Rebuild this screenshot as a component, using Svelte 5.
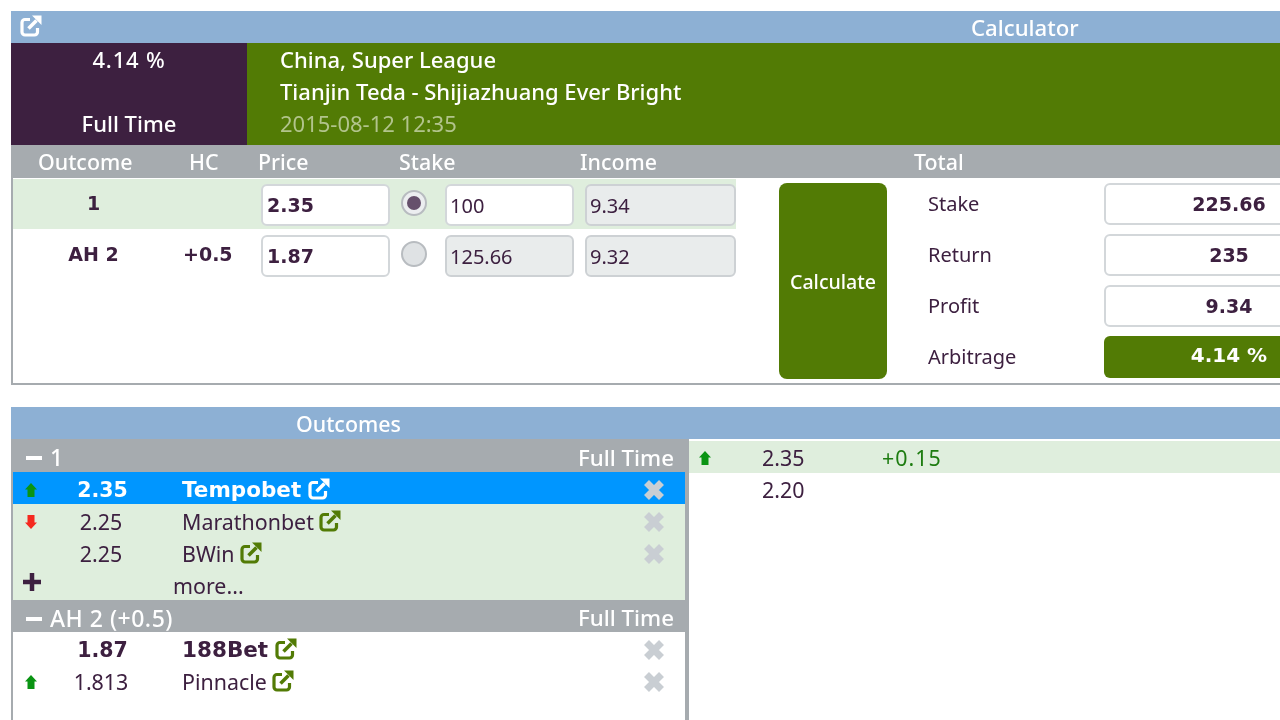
<script>
  const calcRows = [
    { name: "1", hc: "", price: "2.35", stake: "100", income: "9.34", active: true },
    { name: "AH 2", hc: "+0.5", price: "1.87", stake: "125.66", income: "9.32", active: false }
  ];
  const totals = [
    { label: "Stake", value: "225.66" },
    { label: "Return", value: "235" },
    { label: "Profit", value: "9.34" }
  ];
  const groups = [
    {
      title: "1",
      tint: true,
      more: true,
      rows: [
        { arrow: "up", odds: "2.35", book: "Tempobet", best: true, selected: true },
        { arrow: "down", odds: "2.25", book: "Marathonbet" },
        { arrow: "", odds: "2.25", book: "BWin" }
      ]
    },
    {
      title: "AH 2 (+0.5)",
      tint: false,
      more: false,
      rows: [
        { arrow: "", odds: "1.87", book: "188Bet", best: true },
        { arrow: "up", odds: "1.813", book: "Pinnacle" }
      ]
    }
  ];
</script>

{#snippet extLink(cls)}
  <svg class="ext {cls}" viewBox="0 0 22 22" aria-hidden="true">
    <path d="M10 4.5H5a3 3 0 0 0-3 3v9.5a3 3 0 0 0 3 3h9.5a3 3 0 0 0 3-3V13" fill="none" stroke="currentColor" stroke-width="3.2" />
    <path d="M12 .5h9.5V10z" fill="currentColor" />
    <path d="M16.5 5.5L8.5 13.5" fill="none" stroke="currentColor" stroke-width="3.6" />
  </svg>
{/snippet}

{#snippet arrow(dir)}
  <svg class="arrow {dir}" viewBox="0 0 12 14" aria-hidden="true">
    <path d="M6 0l6 6.5H9.5V14h-7V6.5H0z" fill="currentColor" />
  </svg>
{/snippet}

<div class="page">
  <section class="panel calc">
    <header class="title">
      {@render extLink("light")}
      <span class="calc-title">Calculator</span>
    </header>
    <div class="info">
      <div class="pct">
        <span class="pct-val">4.14 %</span>
        <span>Full Time</span>
      </div>
      <div class="match">
        <span>China, Super League</span>
        <span>Tianjin Teda - Shijiazhuang Ever Bright</span>
        <span class="date">2015-08-12 12:35</span>
      </div>
    </div>
    <div class="heads">
      <span class="h-outcome">Outcome</span>
      <span class="h-hc">HC</span>
      <span class="h-price">Price</span>
      <span class="h-stake">Stake</span>
      <span class="h-income">Income</span>
      <span class="h-total">Total</span>
    </div>
    <div class="calc-body">
      <div class="calc-rows">
        {#each calcRows as row}
          <div class="calc-row" class:tint={row.active}>
            <b class="c-name">{row.name}</b>
            <b class="c-hc">{row.hc}</b>
            <div class="field strong c-price">{row.price}</div>
            <span class="radio" class:on={row.active}></span>
            <div class="field c-stake" class:off={!row.active}>{row.stake}</div>
            <div class="field off c-income">{row.income}</div>
          </div>
        {/each}
      </div>
      <button class="calculate">Calculate</button>
      <div class="totals">
        {#each totals as t}
          <div class="total-row">
            <span class="t-label">{t.label}</span>
            <div class="field strong t-value">{t.value}</div>
          </div>
        {/each}
        <div class="total-row">
          <span class="t-label">Arbitrage</span>
          <div class="t-value arb">4.14 %</div>
        </div>
      </div>
    </div>
  </section>

  <section class="panel outcomes">
    <header class="title"><span class="out-title">Outcomes</span></header>
    <div class="out-body">
      <div class="out-left">
        {#each groups as g}
          <div class="group-head">
            <span class="minus"></span>
            <span class="g-title">{g.title}</span>
            <span class="g-time">Full Time</span>
          </div>
          <div class:tint={g.tint}>
            {#each g.rows as r}
              <div class="odds-row" class:selected={r.selected} class:best={r.best}>
                <span class="o-arrow">{#if r.arrow}{@render arrow(r.arrow)}{/if}</span>
                <span class="o-odds">{r.odds}</span>
                <span class="o-book">{r.book}{@render extLink("")}</span>
                <svg class="remove" viewBox="0 0 22 22" aria-hidden="true">
                  <path d="M3.5 3.5l15 15M18.5 3.5l-15 15" stroke="currentColor" stroke-width="7" />
                </svg>
              </div>
            {/each}
            {#if g.more}
              <div class="odds-row more">
                <svg class="plus" viewBox="0 0 18 18" aria-hidden="true">
                  <path d="M0 9h18M9 0v18" stroke="currentColor" stroke-width="4.5" />
                </svg>
                <span>more...</span>
              </div>
            {/if}
          </div>
        {/each}
      </div>
      <div class="out-right">
        <div class="hist tint">
          <span class="o-arrow">{@render arrow("up")}</span>
          <span class="h-odds">2.35</span>
          <span class="h-diff">+0.15</span>
        </div>
        <div class="hist">
          <span class="o-arrow"></span>
          <span class="h-odds">2.20</span>
        </div>
      </div>
    </div>
  </section>
</div>

<style>
  :global(body) {
    margin: 0;
    background: #fff;
  }
  .page {
    width: 1280px;
    height: 720px;
    overflow: hidden;
    box-sizing: border-box;
    padding: 11px 0 0 11px;
    display: flex;
    flex-direction: column;
    gap: 22px;
    font-family: "Noto Sans", sans-serif;
    font-size: 21.4px;
    color: #3d2040;
    filter: blur(0.5px);
  }
  .panel {
    width: 1300px;
    flex: none;
  }
  .title {
    height: 32px;
    background: #8db0d4;
    color: #fff;
    display: flex;
    align-items: center;
    font-size: 22.2px;
    font-weight: 500;
    line-height: 33px;
  }
  .title .ext {
    margin-left: 9px;
    margin-top: -3px;
  }
  .calc-title {
    margin-left: 929px;
  }
  .out-title {
    margin-left: 285px;
    font-size: 21.4px;
  }
  .ext {
    width: 22px;
    height: 22px;
    color: #527b05;
    flex: none;
    margin-left: 5px;
  }
  .best .ext {
    margin-left: 7px;
  }
  .ext.light,
  .selected .ext {
    color: #fff;
  }

  .calc {
    border-bottom: 2px solid #a6abaf;
    height: 372px;
  }
  .info {
    height: 102px;
    display: flex;
    background: #527b05;
    color: #fff;
    font-size: 22px;
    font-weight: 500;
    line-height: 32px;
  }
  .pct {
    width: 236px;
    background: #3d2040;
    display: flex;
    flex-direction: column;
    justify-content: space-between;
    align-items: center;
    padding-bottom: 6px;
    box-sizing: border-box;
  }
  .pct-val {
    letter-spacing: 0.8px;
  }
  .match {
    display: flex;
    flex-direction: column;
    padding-left: 33px;
  }
  .date {
    color: #b2c48c;
    font-weight: 400;
  }
  .heads {
    height: 33px;
    box-sizing: border-box;
    padding-bottom: 1px;
    background: #a6abaf;
    color: #fff;
    font-size: 21.4px;
    font-weight: 500;
    display: grid;
    grid-template-columns: 27px 151px 69px 141px 181px 334px auto;
    align-items: center;
  }
  .h-outcome { grid-column: 2; }
  .h-hc { grid-column: 3; }
  .h-price { grid-column: 4; }
  .h-stake { grid-column: 5; }
  .h-income { grid-column: 6; }
  .h-total { grid-column: 7; }

  .calc-body {
    display: flex;
    height: 205px;
    border-left: 2px solid #a6abaf;
    padding-top: 1px;
    box-sizing: border-box;
  }
  .calc-rows {
    width: 723px;
    flex: none;
  }
  .calc-row {
    height: 50px;
    margin-bottom: 1px;
    display: grid;
    grid-template-columns: 161px 87px 129px 55px 129px 11px 151px;
    grid-template-areas: "name hc price radio stake gap income";
    align-items: start;
    box-sizing: border-box;
    padding-top: 5px;
  }
  .c-price { grid-area: price; }
  .c-stake { grid-area: stake; }
  .c-income { grid-area: income; }
  .tint {
    background: #dfeedd;
  }
  .c-name, .c-hc {
    font: bold 19px/38px "DejaVu Sans", sans-serif;
  }
  .c-name { grid-area: name; text-align: center; }
  .c-hc { grid-area: hc; padding-left: 9px; }
  .field {
    height: 42px;
    box-sizing: border-box;
    background: #fff;
    border: 2px solid #d3d7da;
    border-radius: 6px;
    padding-left: 3px;
    font-size: 20px;
    line-height: 39px;
  }
  .field.strong {
    padding-left: 4px;
    font: bold 19px/39px "DejaVu Sans", sans-serif;
  }
  .field.off {
    background: #e9ecec;
    border-color: #cdd1d4;
  }
  .radio {
    grid-area: radio;
    width: 26px;
    height: 26px;
    margin: 6px 0 0 11px;
    box-sizing: border-box;
    border-radius: 50%;
    background: #dfe2e4;
    border: 2px solid #b8bcc0;
    position: relative;
  }
  .radio.on {
    background: #eceef0;
  }
  .radio.on::after {
    content: "";
    position: absolute;
    left: 4px;
    top: 4px;
    width: 14px;
    height: 14px;
    border-radius: 50%;
    background: #66506c;
  }
  .calculate {
    width: 108px;
    height: 196px;
    margin: 4px 0 0 43px;
    flex: none;
    background: #527b05;
    color: #fff;
    border: 0;
    border-radius: 8px;
    padding: 0;
    font: 500 19.6px "Noto Sans", sans-serif;
  }
  .totals {
    margin-left: 41px;
    padding-top: 4px;
    display: flex;
    flex-direction: column;
    gap: 9px;
  }
  .total-row {
    display: flex;
    height: 42px;
    align-items: center;
  }
  .t-label {
    width: 176px;
    font-size: 20px;
    margin-top: -2px;
  }
  .t-value,
  .field.strong.t-value {
    width: 186px;
    text-align: center;
    padding: 0 0 0 64px;
  }
  .arb {
    height: 42px;
    box-sizing: border-box;
    background: #527b05;
    color: #fff;
    border-radius: 6px;
    font: bold 20px/38px "DejaVu Sans", sans-serif;
  }

  .out-body {
    display: flex;
    border-left: 2px solid #a6abaf;
  }
  .out-left {
    width: 672px;
    flex: none;
    padding-bottom: 40px;
    border-right: 4px solid #a6abaf;
  }
  .group-head {
    height: 32px;
    box-sizing: border-box;
    background: #a6abaf;
    color: #fff;
    font-weight: 500;
    display: flex;
    align-items: center;
    padding: 3px 11px 0 13px;
  }
  .group-head:first-child {
    height: 33px;
  }
  .minus {
    width: 16px;
    height: 4px;
    background: #fff;
    margin: 2px 8px 0 0;
  }
  .g-title {
    font-size: 23px;
    letter-spacing: 0.5px;
  }
  .g-time {
    margin-left: auto;
    font-size: 22.3px;
  }
  .odds-row {
    height: 32px;
    box-sizing: border-box;
    padding-top: 2px;
    display: grid;
    grid-template-columns: 33px 110px 1fr 42px;
    align-items: center;
  }
  .o-arrow {
    display: flex;
    padding-left: 12px;
    margin-top: 1px;
  }
  .arrow {
    width: 12px;
    height: 14px;
  }
  .arrow.up { color: #0a9413; }
  .arrow.down { color: #f5291f; transform: rotate(180deg); }
  .o-odds {
    text-align: center;
  }
  .o-book {
    padding-left: 26px;
    display: flex;
    align-items: center;
  }
  .best .o-odds {
    font: bold 20.5px "DejaVu Sans", sans-serif;
    margin-top: 2px;
    padding-left: 3px;
  }
  .best .o-book {
    font: bold 21.5px "DejaVu Sans", sans-serif;
  }
  .selected {
    background: #0096ff;
    color: #fff;
  }
  .remove {
    width: 22px;
    height: 22px;
    color: #c9ced3;
    margin-top: 1px;
  }
  .more {
    grid-template-columns: 160px 1fr;
  }
  .plus {
    width: 18px;
    height: 18px;
    color: #3d2040;
    margin: 0 0 6px 10px;
  }
  .out-right {
    flex: 1;
    padding-top: 2px;
  }
  .hist {
    height: 32px;
    display: grid;
    grid-template-columns: 73px 120px auto;
    align-items: center;
  }
  .hist .o-arrow {
    padding-left: 10px;
  }
  .h-diff {
    color: #1d7c10;
    letter-spacing: 1px;
  }
</style>
